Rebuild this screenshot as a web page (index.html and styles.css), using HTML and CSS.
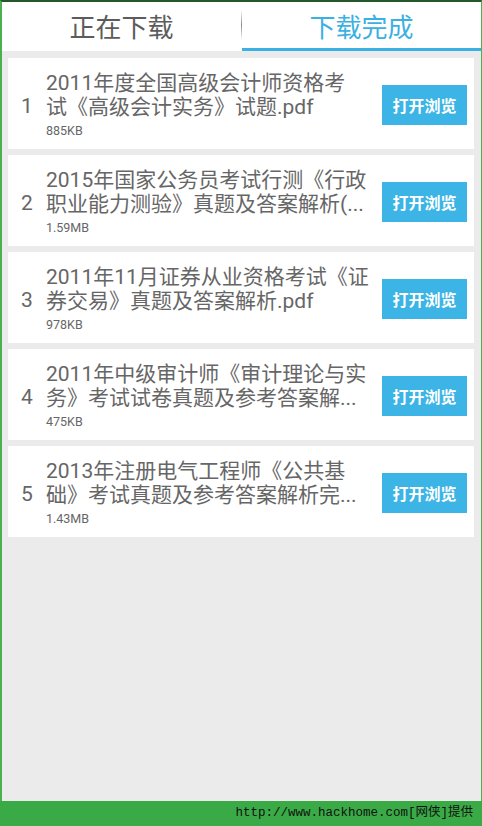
FILE: index.html
```html
<!DOCTYPE html>
<html lang="zh-CN">
<head>
    <meta charset="UTF-8">
    <meta name="viewport" content="width=device-width, initial-scale=1.0">
    <title>下载完成</title>
    <link rel="stylesheet" href="styles.css">
</head>
<body>
    <div class="screen">
        <div class="tabs">
            <div class="tab">正在下载</div>
            <div class="divider"></div>
            <div class="tab active">下载完成</div>
        </div>

        <div class="list">
            <div class="item">
                <div class="num">1</div>
                <div class="info">
                    <div class="title">2011年度全国高级会计师资格考<br>试《高级会计实务》试题.pdf</div>
                    <div class="size">885KB</div>
                </div>
                <button class="open">打开浏览</button>
            </div>
            <div class="item">
                <div class="num">2</div>
                <div class="info">
                    <div class="title">2015年国家公务员考试行测《行政<br>职业能力测验》真题及答案解析(...</div>
                    <div class="size">1.59MB</div>
                </div>
                <button class="open">打开浏览</button>
            </div>
            <div class="item">
                <div class="num">3</div>
                <div class="info">
                    <div class="title">2011年11月证券从业资格考试《证<br>券交易》真题及答案解析.pdf</div>
                    <div class="size">978KB</div>
                </div>
                <button class="open">打开浏览</button>
            </div>
            <div class="item">
                <div class="num">4</div>
                <div class="info">
                    <div class="title">2011年中级审计师《审计理论与实<br>务》考试试卷真题及参考答案解...</div>
                    <div class="size">475KB</div>
                </div>
                <button class="open">打开浏览</button>
            </div>
            <div class="item">
                <div class="num">5</div>
                <div class="info">
                    <div class="title">2013年注册电气工程师《公共基<br>础》考试真题及参考答案解析完...</div>
                    <div class="size">1.43MB</div>
                </div>
                <button class="open">打开浏览</button>
            </div>
        </div>
    </div>

    <div class="footer">http://www.hackhome.com[网侠]提供</div>
</body>
</html>
```

FILE: styles.css
```css
body {
    margin: 0;
    font-family: Roboto, "Noto Sans CJK SC", sans-serif;
    background: #3aaa46;
}
.screen {
    height: 801px;
    box-sizing: border-box;
    border-top: 2px solid #24582a;
    border-left: 2px solid #4cb050;
    border-right: 1px solid #4cb050;
    background-color: #ebebeb;
}
.tabs {
    display: flex;
    align-items: center;
    background-color: #fff;
}
.tab {
    flex: 1;
    height: 42px;
    padding-top: 4px;
    line-height: 44px;
    text-align: center;
    font-size: 26px;
    color: #5c5c5c;
    border-bottom: 3px solid #fff;
}
.tab.active {
    color: #3bb0e2;
    border-bottom-color: #3bb0e2;
}
.divider {
    width: 1px;
    height: 30px;
    margin-bottom: 3px;
    background: linear-gradient(#fff, #888, #fff);
}
.list {
    display: flex;
    flex-direction: column;
    gap: 6px;
    padding: 7px 7px 0 6px;
}
.item {
    display: flex;
    align-items: center;
    background-color: #fff;
    padding: 13px 7px 10px 0;
}
.num {
    width: 38px;
    text-align: center;
    font-size: 21px;
    color: #666;
    padding-top: 2px;
}
.info {
    flex: 1;
    white-space: nowrap;
}
.title {
    font-size: 21px;
    line-height: 24px;
    color: #666;
}
.size {
    margin-top: 4px;
    font-size: 12.5px;
    line-height: 16px;
    color: #666;
}
.open {
    width: 85px;
    height: 40px;
    border: none;
    background-color: #3cb4e5;
    color: #fff;
    font-family: "Noto Sans CJK SC", sans-serif;
    font-size: 16px;
    font-weight: bold;
    padding: 0;
}
.footer {
    height: 25px;
    line-height: 25px;
    text-align: right;
    padding-right: 9px;
    font-family: "Liberation Mono", "Noto Sans CJK SC", monospace;
    font-size: 12.5px;
    color: #111;
}
```
